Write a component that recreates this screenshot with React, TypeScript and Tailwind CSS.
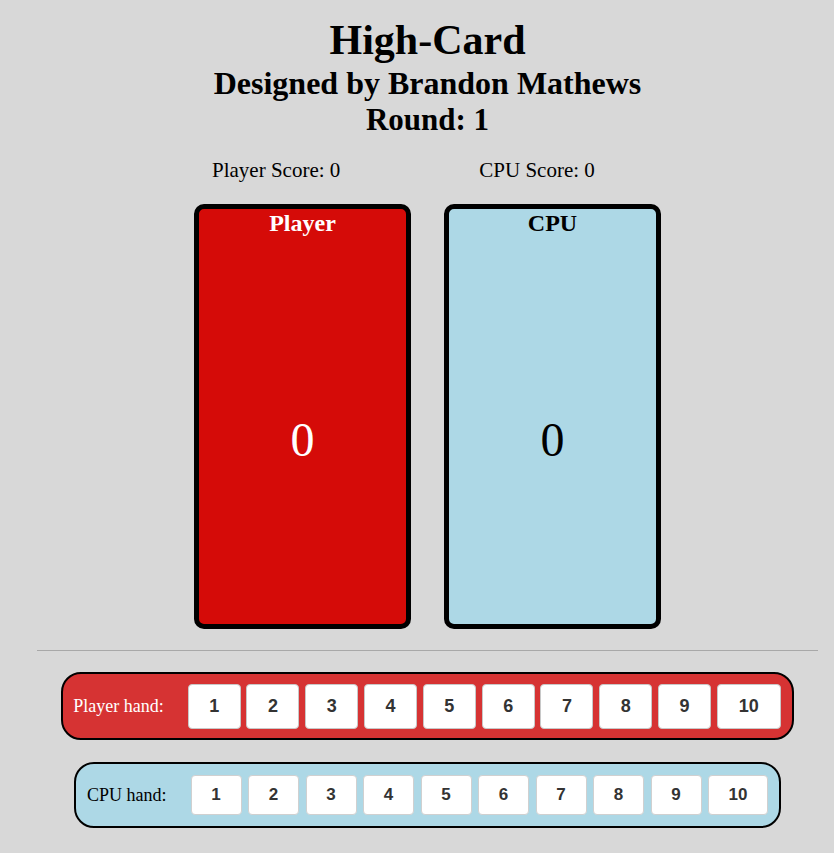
const hand = [1, 2, 3, 4, 5, 6, 7, 8, 9, 10];

function Card({ title, value, red }: { title: string; value: number; red?: boolean }) {
  return (
    <div
      className={`w-[217px] h-[425px] border-[5px] border-black rounded-[10px] flex flex-col items-center ${
        red ? "bg-[#d50b08] text-white" : "bg-[#add8e6] text-black"
      }`}
    >
      <div className="text-[24px] font-bold leading-[28px]">{title}</div>
      <div className="mt-[176px] text-[48px] leading-[53px]">{value}</div>
    </div>
  );
}

export default function App() {
  return (
    <div className="min-h-[853px] bg-[#d8d8d8] font-['Liberation_Serif','Times_New_Roman',serif] text-black">
      <div className="pl-[37px] pr-[16px] pt-[16px] flex flex-col items-center">
        <h1 className="text-[42px] font-bold leading-[48px]">High-Card</h1>
        <h2 className="text-[32px] font-bold leading-[38px]">Designed by Brandon Mathews</h2>
        <h2 className="text-[31px] font-bold leading-[36px]">Round: 1</h2>

        {/* scores */}
        <div className="w-full flex mt-[20px] text-[21px] leading-[24px]">
          <span className="ml-[175px]">Player Score: 0</span>
          <span className="ml-[139px]">CPU Score: 0</span>
        </div>

        <div className="flex gap-[33px] mt-[22px]">
          <Card title="Player" value={0} red />
          <Card title="CPU" value={0} />
        </div>

        <hr className="w-full mt-[21px] border-0 border-t border-[#a8a8a8]" />

        {/* player hand */}
        <div className="mt-[21px] inline-flex items-center h-[68px] border-2 border-black rounded-[20px] bg-[#d63333] pl-[10px] pr-[11px]">
          <span className="text-white text-[18px] mr-[24px]">Player hand:</span>
          <div className="flex gap-[5.8px]">
            {hand.map((n) => (
              <button
                key={n}
                className={`${n === 10 ? "w-[64px]" : "w-[53px]"} h-[45px] bg-white border border-[#c8c8c8] rounded-[4px] font-['Liberation_Sans',Arial,sans-serif] font-bold text-[18px] text-[#333]`}
              >
                {n}
              </button>
            ))}
          </div>
        </div>

        {/* cpu hand */}
        <div className="mt-[22px] inline-flex items-center h-[66px] border-2 border-black rounded-[20px] bg-[#add8e6] pl-[11px] pr-[11px]">
          <span className="text-black text-[18px] mr-[24px]">CPU hand:</span>
          <div className="flex gap-[6.5px]">
            {hand.map((n) => (
              <button
                key={n}
                className={`${n === 10 ? "w-[60px]" : "w-[51px]"} h-[40px] bg-white border border-[#d0d0d0] rounded-[4px] font-['Liberation_Sans',Arial,sans-serif] font-bold text-[17px] text-[#333]`}
              >
                {n}
              </button>
            ))}
          </div>
        </div>
      </div>
    </div>
  );
}
